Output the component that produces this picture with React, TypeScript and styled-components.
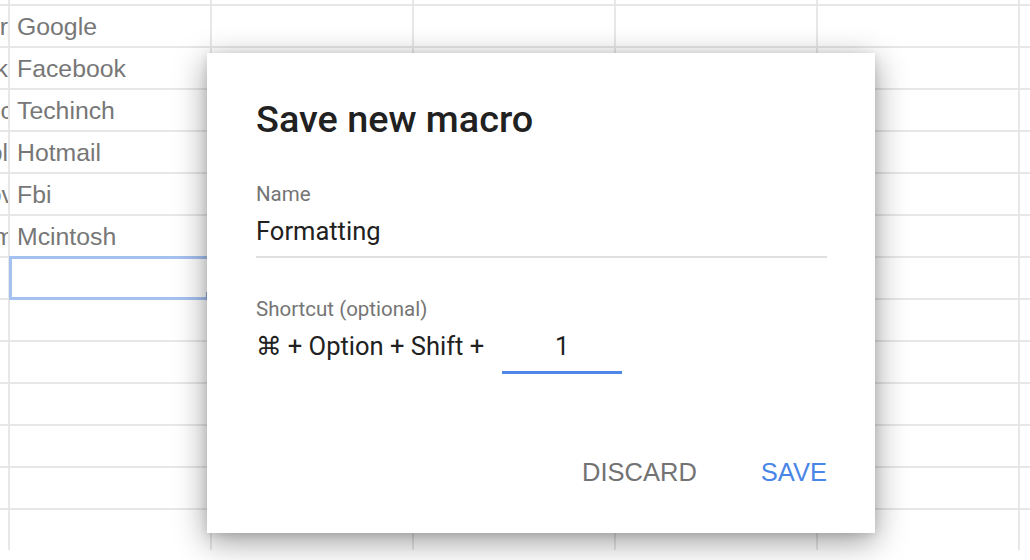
import React from "react";
import styled, { createGlobalStyle } from "styled-components";

const GlobalStyle = createGlobalStyle`
  html, body {
    margin: 0;
    padding: 0;
    background: #ffffff;
    overflow: hidden;
  }
  body {
    width: 1030px;
    height: 560px;
    font-family: "Liberation Sans", Arial, sans-serif;
  }
`;

const Page = styled.div`
  position: relative;
  width: 1030px;
  height: 560px;
  overflow: hidden;
  background: #ffffff;
`;

const Sheet = styled.div`
  display: grid;
  grid-template-columns: 8px repeat(6, 200px);
  grid-template-rows: 4px repeat(13, 40px);
  gap: 2px;
  width: max-content;
  background: #e7e7e7;
`;

const Cell = styled.div<{ $selected?: boolean }>`
  position: relative;
  background: #ffffff;
  padding-left: 7px;
  font-family: "Liberation Sans", Arial, sans-serif;
  font-size: 24.8px;
  line-height: 41px;
  color: #777777;
  white-space: nowrap;
  overflow: ${(p) => (p.$selected ? "visible" : "hidden")};

  ${(p) =>
    p.$selected &&
    `
    &::before {
      content: "";
      position: absolute;
      left: -1px;
      top: -2px;
      right: -2px;
      bottom: -2px;
      border: 3px solid #a5c1f1;
      pointer-events: none;
    }
    &::after {
      content: "";
      position: absolute;
      right: -8px;
      bottom: -6px;
      width: 12px;
      height: 12px;
      background: #8eaee6;
    }
  `}
`;

const ClipCell = styled.div`
  display: flex;
  justify-content: flex-end;
  overflow: hidden;
  background: #ffffff;
  font-family: "Liberation Sans", Arial, sans-serif;
  font-size: 24.8px;
  line-height: 41px;
  color: #777777;
  white-space: nowrap;
`;

const ClipText = styled.span<{ $cut: number }>`
  margin-right: -${(p) => p.$cut}px;
`;

const Dialog = styled.div`
  position: absolute;
  left: 207px;
  top: 53px;
  width: 668px;
  height: 480px;
  box-sizing: border-box;
  padding: 44px 48px 45px 49px;
  display: flex;
  flex-direction: column;
  background: #ffffff;
  box-shadow: 0 8px 30px rgba(0, 0, 0, 0.4), 0 2px 8px rgba(0, 0, 0, 0.1);
  font-family: Roboto, "Noto Sans", sans-serif;
`;

const Title = styled.h1`
  margin: 0;
  font-family: Roboto, "Noto Sans", sans-serif;
  font-weight: 500;
  font-size: 37.8px;
  line-height: 44px;
  color: #212121;
`;

const Label = styled.div<{ $gap: number }>`
  margin-top: ${(p) => p.$gap}px;
  font-size: 20.5px;
  line-height: 24px;
  color: #757575;
`;

const NameValue = styled.div`
  margin-top: 10px;
  padding-bottom: 10px;
  border-bottom: 2px solid #e0e0e0;
  font-size: 25.5px;
  line-height: 30px;
  color: #212121;
`;

const ShortcutRow = styled.div`
  margin-top: 10px;
  display: flex;
  align-items: flex-start;
  gap: 18px;
  font-size: 25.5px;
  line-height: 30px;
  color: #212121;
`;

const Keys = styled.span`
  white-space: nowrap;
  font-family: Roboto, "DejaVu Sans", sans-serif;
`;

const KeyInput = styled.input`
  width: 120px;
  height: 30px;
  box-sizing: content-box;
  margin: 0;
  padding: 0 0 10px 0;
  border: none;
  border-bottom: 3px solid #4f87e9;
  outline: none;
  background: transparent;
  text-align: center;
  font-family: Roboto, "Noto Sans", sans-serif;
  font-size: 25.5px;
  line-height: 30px;
  color: #212121;
`;

const Actions = styled.div`
  margin-top: auto;
  display: flex;
  justify-content: flex-end;
  gap: 64px;
`;

const ActionButton = styled.button<{ $primary?: boolean }>`
  margin: 0 0 2px 0;
  padding: 0;
  border: none;
  background: none;
  font-family: "Liberation Sans", Arial, sans-serif;
  font-size: 25.5px;
  line-height: 28px;
  text-transform: uppercase;
  color: ${(p) => (p.$primary ? "#4a86e8" : "#737373")};
  cursor: pointer;
`;

const colA: { text: string; cut: number }[] = [
  { text: "", cut: 0 },
  { text: "Search vendor", cut: 0 },
  { text: "Social network", cut: 0 },
  { text: "Tech inc", cut: 5 },
  { text: "Email tool", cut: 0 },
  { text: "Gov", cut: 6 },
  { text: "Apple com", cut: 6 },
];
const colB = ["", "Google", "Facebook", "Techinch", "Hotmail", "Fbi", "Mcintosh"];

const ROWS = 14;
const SELECTED_ROW = 7;

export default function App() {
  const cells: React.ReactNode[] = [];
  for (let r = 0; r < ROWS; r++) {
    const a = colA[r];
    cells.push(
      <ClipCell key={`a${r}`}>
        {a ? <ClipText $cut={a.cut}>{a.text}</ClipText> : null}
      </ClipCell>
    );
    for (let c = 0; c < 6; c++) {
      const text = c === 0 ? colB[r] ?? "" : "";
      cells.push(
        <Cell key={`c${r}-${c}`} $selected={c === 0 && r === SELECTED_ROW}>
          {text}
        </Cell>
      );
    }
  }

  return (
    <Page>
      <GlobalStyle />
      <Sheet>{cells}</Sheet>
      <Dialog>
        <Title>Save new macro</Title>
        <Label $gap={41}>Name</Label>
        <NameValue>Formatting</NameValue>
        <Label $gap={39}>Shortcut (optional)</Label>
        <ShortcutRow>
          <Keys>⌘ + Option + Shift +</Keys>
          <KeyInput readOnly value="1" />
        </ShortcutRow>
        <Actions>
          <ActionButton>Discard</ActionButton>
          <ActionButton $primary>Save</ActionButton>
        </Actions>
      </Dialog>
    </Page>
  );
}
